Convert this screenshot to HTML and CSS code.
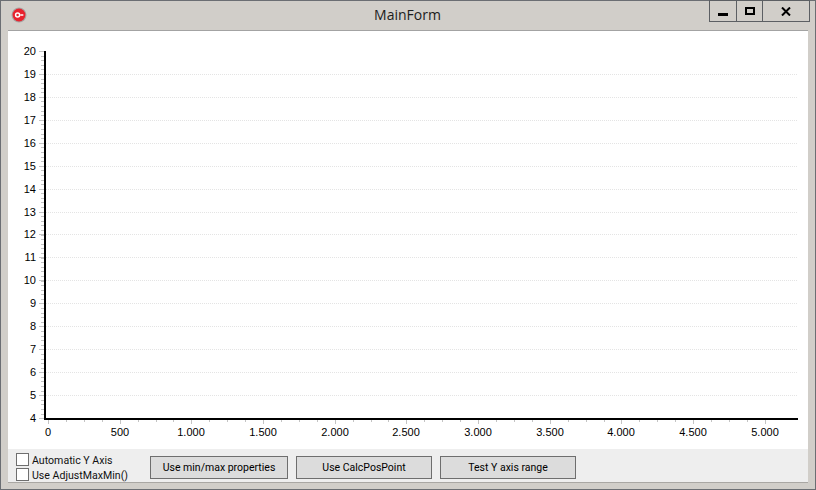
FILE: index.html
```html
<!DOCTYPE html>
<html lang="en">
<head>
<meta charset="utf-8">
<title>MainForm</title>
<link rel="stylesheet" href="styles.css">
</head>
<body>
<div class="window">
  <header class="titlebar">
    <svg class="app-icon" width="16" height="16" viewBox="0 0 16 16">
      <circle cx="8" cy="8" r="7.5" fill="#a8a4a2"/>
      <circle cx="8" cy="8" r="6.4" fill="#e8222e"/>
      <circle cx="6.6" cy="8" r="2" fill="none" stroke="#fff" stroke-width="1.5"/>
      <path d="M8.5 8h4M11 7v2" stroke="#fff" stroke-width="1"/>
    </svg>
    <div class="title">MainForm</div>
    <div class="controls">
      <div class="ctl ctl-min"><span class="glyph-min"></span></div>
      <div class="ctl ctl-max"><span class="glyph-max"></span></div>
      <div class="ctl ctl-close">
        <svg width="10" height="9" viewBox="0 0 10 9"><path d="M1 .5 9 8.5M9 .5 1 8.5" stroke="#000" stroke-width="2"/></svg>
      </div>
    </div>
  </header>
  <main class="client">
    <svg class="chart" width="800" height="418" viewBox="8 31 800 418">
      <g class="grid">
        <path d="M46 74H797M46 97H797M46 120H797M46 143H797M46 166H797M46 189H797M46 212H797M46 234H797M46 257H797M46 280H797M46 303H797M46 326H797M46 349H797M46 372H797M46 395H797"/>
      </g>
      <path class="tick-minor" d="M42.5 51V418"/>
      <path class="tick-major" d="M39 51H44M39 74H44M39 97H44M39 120H44M39 143H44M39 166H44M39 189H44M39 212H44M39 234H44M39 257H44M39 280H44M39 303H44M39 326H44M39 349H44M39 372H44M39 395H44M39 418H44"/>
      <path class="tick-minor-x" d="M48 421H783"/>
      <path class="tick-major" d="M48 420V424M120 420V424M191 420V424M263 420V424M335 420V424M406 420V424M478 420V424M550 420V424M621 420V424M693 420V424M765 420V424"/>
      <path class="axis" d="M44.5 51V419H797.5"/>
      <g class="labels-y">
        <text x="36" y="55">20</text><text x="36" y="78">19</text><text x="36" y="101">18</text><text x="36" y="124">17</text>
        <text x="36" y="147">16</text><text x="36" y="170">15</text><text x="36" y="193">14</text><text x="36" y="216">13</text>
        <text x="36" y="238">12</text><text x="36" y="261">11</text><text x="36" y="284">10</text><text x="36" y="307">9</text>
        <text x="36" y="330">8</text><text x="36" y="353">7</text><text x="36" y="376">6</text><text x="36" y="399">5</text>
        <text x="36" y="422">4</text>
      </g>
      <g class="labels-x">
        <text x="48" y="436">0</text><text x="120" y="436">500</text><text x="191" y="436">1.000</text><text x="263" y="436">1.500</text>
        <text x="335" y="436">2.000</text><text x="406" y="436">2.500</text><text x="478" y="436">3.000</text><text x="550" y="436">3.500</text>
        <text x="621" y="436">4.000</text><text x="693" y="436">4.500</text><text x="765" y="436">5.000</text>
      </g>
    </svg>
    <div class="panel">
      <div class="checks">
        <label class="check"><span class="box"></span>Automatic Y Axis</label>
        <label class="check"><span class="box"></span>Use AdjustMaxMin()</label>
      </div>
      <div class="buttons">
        <button class="btn btn-wide">Use min/max properties</button>
        <button class="btn">Use CalcPosPoint</button>
        <button class="btn">Test Y axis range</button>
      </div>
    </div>
  </main>
</div>
</body>
</html>
```

FILE: styles.css
```css
* { box-sizing: border-box; }
html, body { margin: 0; padding: 0; }
body { width: 816px; height: 490px; overflow: hidden; background: #d1cec9; }

.window {
  width: 816px;
  height: 490px;
  display: flex;
  flex-direction: column;
  background: #d1cec9;
  border: 1px solid #6b6e73;
  padding: 0 7px 5px;
  font-family: Roboto, "Liberation Sans", sans-serif;
  color: #000;
}

.titlebar {
  height: 29px;
  flex: none;
  position: relative;
  display: flex;
  align-items: flex-start;
}
.app-icon { position: absolute; left: 3px; top: 6px; }
.title {
  position: absolute;
  left: 0;
  right: 0;
  top: 4px;
  text-align: center;
  font-family: "Open Sans", sans-serif;
  font-size: 14px;
  line-height: 20px;
  color: #1c1c1c;
  margin-left: -1px;
}
.controls {
  position: absolute;
  right: -2px;
  top: -1px;
  display: flex;
  height: 22px;
  border: 1px solid #5c5f63;
}
.ctl { display: flex; align-items: center; justify-content: center; height: 20px; }
.ctl-min { width: 27px; border-right: 1px solid #5c5f63; }
.ctl-max { width: 26px; border-right: 1px solid #5c5f63; }
.ctl-close { width: 46px; }
.glyph-min { width: 10px; height: 3px; background: #000; margin-top: 6px; }
.glyph-max { width: 10px; height: 8px; border: 2px solid #000; margin-left: 1px; }

.client {
  flex: none;
  height: 452px;
  width: 800px;
  background: #fff;
  border-top: 1px solid #a3a3a3;
  display: flex;
  flex-direction: column;
  box-shadow: 0 1px 0 #a9a7a3;
}
.chart { display: block; flex: none; }

.grid path { stroke: #e4e4e4; stroke-width: 1; stroke-dasharray: 1 1; fill: none; shape-rendering: crispEdges; }
.tick-major { stroke: #c4c4c4; stroke-width: 1; fill: none; shape-rendering: crispEdges; }
.tick-minor { stroke: #c4c4c4; stroke-width: 3; stroke-dasharray: 1 3.59; fill: none; shape-rendering: crispEdges; }
.tick-minor-x { stroke: #c4c4c4; stroke-width: 2; stroke-dasharray: 1 16.92; fill: none; shape-rendering: crispEdges; }
.axis { stroke: #000; stroke-width: 2; fill: none; shape-rendering: crispEdges; }
.labels-y text, .labels-x text { font-family: "Liberation Sans", Arial, sans-serif; font-size: 11px; fill: #000; }
.labels-y text { text-anchor: end; }
.labels-x text { text-anchor: middle; }

.panel {
  flex: 1;
  background: #eeeeee;
  display: flex;
  align-items: flex-start;
  padding-left: 8px;
}
.checks { width: 134px; display: flex; flex-direction: column; gap: 2px; padding-top: 4px; flex: none; }
.check { display: flex; align-items: flex-start; gap: 3px; height: 13px; font-size: 10.6px; line-height: 15px; color: #111; white-space: nowrap; }
.box { width: 13px; height: 13px; background: #fff; border: 1px solid #6f6f6f; flex: none; }

.buttons { display: flex; gap: 8px; padding-top: 7px; }
.btn {
  width: 136px;
  height: 23px;
  padding: 0;
  background: #dcdcdc;
  border: 1px solid #6e6e6e;
  font-family: Roboto, "Liberation Sans", sans-serif;
  font-size: 10.5px;
  color: #000;
}
.btn-wide { width: 138px; }
```
